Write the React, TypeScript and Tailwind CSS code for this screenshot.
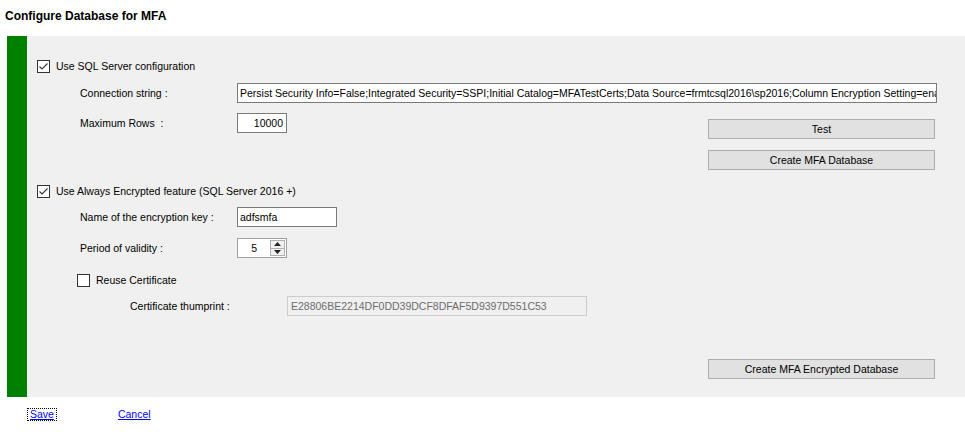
import React from "react";

const font = { fontFamily: '"Liberation Sans", Arial, sans-serif' };

function Check({ checked }: { checked: boolean }) {
  return (
    <div className="w-[13px] h-[13px] border border-[#333333] bg-white flex items-center justify-center shrink-0">
      {checked && (
        <svg width="11" height="11" viewBox="0 0 11 11">
          <polyline points="1.5,5.5 4,8 9.5,2.5" fill="none" stroke="#333333" strokeWidth="1.1" />
        </svg>
      )}
    </div>
  );
}

function Btn({ label }: { label: string }) {
  return (
    <div className="w-[227px] h-[20px] bg-[#e1e1e1] border border-[#adadad] flex items-center justify-center text-[10.5px] text-black">
      {label}
    </div>
  );
}

export default function App() {
  return (
    <div className="w-[965px] h-[432px] bg-white text-black overflow-hidden" style={font}>
      <div className="h-[36px] pt-[8px] pl-[5px] text-[12px] leading-[16px] font-bold">Configure Database for MFA</div>
      <div className="ml-[7px] flex h-[361px]">
        <div className="w-[20px] bg-[#008000]" />
        <div className="flex-1 bg-[#f0f0f0] pl-[10px] pt-[24px] text-[10.5px] leading-[13px]">
          {/* Row 1 */}
          <div className="flex items-center h-[13px]">
            <Check checked />
            <span className="ml-[6px]">Use SQL Server configuration</span>
          </div>
          {/* Row 2 */}
          <div className="mt-[10px] flex items-center h-[20px]">
            <span className="ml-[43px] w-[157px]">Connection string :</span>
            <div className="w-[700px] h-[20px] bg-white border border-[#7a7a7a] pl-[2px] flex items-center overflow-hidden whitespace-nowrap">
              Persist Security Info=False;Integrated Security=SSPI;Initial Catalog=MFATestCerts;Data Source=frmtcsql2016\sp2016;Column Encryption Setting=enabled
            </div>
          </div>
          {/* Row 3 */}
          <div className="mt-[10px] flex items-start">
            <div className="flex items-center h-[20px]">
              <span className="ml-[43px] w-[157px]">Maximum Rows&nbsp; :</span>
              <div className="w-[50px] h-[20px] bg-white border border-[#7a7a7a] pr-[3px] flex items-center justify-end">10000</div>
            </div>
            <div className="ml-[421px] mt-[6px] flex flex-col gap-[11px]">
              <Btn label="Test" />
              <Btn label="Create MFA Database" />
            </div>
          </div>
          {/* Row 4 */}
          <div className="mt-[15px] flex items-center h-[13px]">
            <Check checked />
            <span className="ml-[6px]">Use Always Encrypted feature (SQL Server 2016 +)</span>
          </div>
          {/* Row 5 */}
          <div className="mt-[9px] flex items-center h-[20px]">
            <span className="ml-[43px] w-[157px]">Name of the encryption key :</span>
            <div className="w-[100px] h-[20px] bg-white border border-[#7a7a7a] pl-[2px] flex items-center">adfsmfa</div>
          </div>
          {/* Row 6 */}
          <div className="mt-[11px] flex items-center h-[20px]">
            <span className="ml-[43px] w-[157px]">Period of validity :</span>
            <div className="w-[50px] h-[20px] bg-white border border-[#a0a0a0] flex items-stretch">
              <div className="flex-1 flex items-center justify-end pr-[13px]">5</div>
              <div className="w-[16px] flex flex-col py-[1px] pr-[1px] gap-[0px]">
                <div className="flex-1 bg-[#f0f0f0] border border-[#b0b0b0] flex items-center justify-center">
                  <svg width="7" height="4" viewBox="0 0 7 4"><polygon points="0,4 7,4 3.5,0" fill="#222" /></svg>
                </div>
                <div className="flex-1 bg-[#f0f0f0] border border-[#b0b0b0] border-t-0 flex items-center justify-center">
                  <svg width="7" height="4" viewBox="0 0 7 4"><polygon points="0,0 7,0 3.5,4" fill="#222" /></svg>
                </div>
              </div>
            </div>
          </div>
          {/* Row 7 */}
          <div className="mt-[16px] flex items-center h-[13px] ml-[40px]">
            <Check checked={false} />
            <span className="ml-[6px]">Reuse Certificate</span>
          </div>
          {/* Row 8 */}
          <div className="mt-[9px] flex items-center h-[20px]">
            <span className="ml-[93px] w-[157px]">Certificate thumprint :</span>
            <div className="w-[300px] h-[20px] bg-[#f0f0f0] border border-[#cccccc] pl-[3px] flex items-center text-[#6d6d6d]">
              E28806BE2214DF0DD39DCF8DFAF5D9397D551C53
            </div>
          </div>
          {/* Row 9 */}
          <div className="mt-[43px] ml-[671px]">
            <Btn label="Create MFA Encrypted Database" />
          </div>
        </div>
      </div>
      <div className="mt-[11px] flex items-center h-[13px] text-[10.5px] leading-[13px]">
        <span className="ml-[27px] border border-dotted border-black px-[2px] text-[#0000ff] underline leading-[11px]">Save</span>
        <span className="ml-[61px] text-[#0000ff] underline">Cancel</span>
      </div>
    </div>
  );
}
